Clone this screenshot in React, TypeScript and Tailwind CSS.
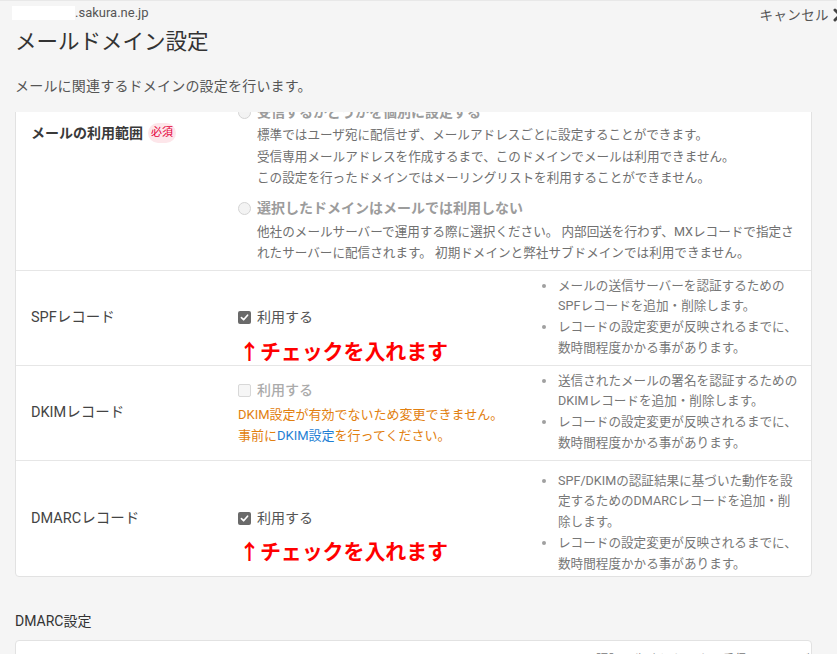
import React from "react";

function Radio() {
  return (
    <span className="inline-block w-[13px] h-[13px] rounded-full border border-[#d4d4d4] bg-[#f3f3f3] shrink-0" />
  );
}

function Checkbox({ checked }: { checked: boolean }) {
  if (checked) {
    return (
      <span className="w-[13px] h-[13px] rounded-[2px] bg-[#6a6a6a] flex items-center justify-center shrink-0">
        <svg width="9" height="9" viewBox="0 0 10 10">
          <path
            d="M1.6 5.2 L4 7.5 L8.4 2.5"
            fill="none"
            stroke="white"
            strokeWidth="1.9"
            strokeLinecap="round"
            strokeLinejoin="round"
          />
        </svg>
      </span>
    );
  }
  return (
    <span className="w-[13px] h-[13px] rounded-[2px] border border-[#d8d8d8] bg-[#f6f6f6] shrink-0" />
  );
}

function Bullets({ items, className }: { items: string[][]; className: string }) {
  return (
    <div className={"w-[271px] shrink-0 text-[12.6px] leading-[20.75px] text-[#777] " + className}>
      {items.map((lines, i) => (
        <div key={i} className="flex">
          <span className="w-[18px] h-[20.75px] shrink-0 flex items-center">
            <span className="ml-[2px] w-[4px] h-[4px] rounded-full bg-[#a0a0a0]" />
          </span>
          <div>
            {lines.map((l, j) => (
              <div key={j} className="whitespace-nowrap">
                {l}
              </div>
            ))}
          </div>
        </div>
      ))}
    </div>
  );
}

function Annotation() {
  return (
    <div className="absolute z-10 left-[1px] top-[33px] whitespace-nowrap text-[21px] leading-[22px] font-bold text-[#ff0000] tracking-[-0.1px]">
      ↑チェックを入れます
    </div>
  );
}

export default function App() {
  return (
    <div className="w-[837px] h-[654px] overflow-hidden bg-[#f5f5f5] border-t border-[#e8e8e8] flex flex-col font-[Roboto,'Noto_Sans_CJK_JP',sans-serif]">
      {/* header row */}
      <div className="h-[27px] flex shrink-0">
        <div className="mt-[3px] h-[18px] flex items-center pl-[12px]">
          <span className="w-[63px] h-[14px] bg-white" />
          <span className="text-[13px] text-[#555]">.sakura.ne.jp</span>
        </div>
        <div className="ml-auto mr-[-11px] mt-[4px] h-[20px] flex items-center gap-[3px]">
          <span className="text-[13.5px] text-[#555] tracking-[0.4px]">キャンセル</span>
          <svg width="16" height="16" viewBox="0 0 16 16">
            <path d="M3 3 L13 13 M13 3 L3 13" stroke="#444" strokeWidth="3" strokeLinecap="round" />
          </svg>
        </div>
      </div>

      <h1 className="shrink-0 pl-[15px] text-[21.5px] leading-[28px] text-[#333]">メールドメイン設定</h1>
      <p className="shrink-0 mt-[20px] pl-[15px] text-[14px] leading-[20px] text-[#555] tracking-[0.2px]">
        メールに関連するドメインの設定を行います。
      </p>

      {/* scroll area */}
      <div className="mt-[16px] flex-1 overflow-hidden">
        <div className="-mt-[21px] ml-[15px] w-[797px] bg-white border border-[#e2e2e2] rounded-[4px]">
          {/* row 1 */}
          <div className="flex">
            <div className="w-[222px] shrink-0 pl-[15px] pt-[31px]">
              <div className="h-[20px] flex items-center">
                <span className="text-[14px] font-bold text-[#3a3a3a]">メールの利用範囲</span>
                <span className="ml-[5px] h-[20px] w-[28px] rounded-full bg-[#fde6ea] text-[#e4003a] text-[11px] flex items-center justify-center">
                  必須
                </span>
              </div>
            </div>
            <div className="flex-1 pt-[8px] pb-[6px]">
              <div className="flex items-center gap-[6px] h-[24px]">
                <Radio />
                <span className="text-[14px] font-bold text-[#9c9c9c]">受信するかどうかを個別に設定する</span>
              </div>
              <div className="pl-[19px] text-[12.6px] leading-[21.5px] text-[#707070]">
                <div>標準ではユーザ宛に配信せず、メールアドレスごとに設定することができます。</div>
                <div>受信専用メールアドレスを作成するまで、このドメインでメールは利用できません。</div>
                <div>この設定を行ったドメインではメーリングリストを利用することができません。</div>
              </div>
              <div className="mt-[8px] flex items-center gap-[6px] h-[24px]">
                <Radio />
                <span className="text-[14px] font-bold text-[#9c9c9c]">選択したドメインはメールでは利用しない</span>
              </div>
              <div className="pl-[19px] text-[12.6px] leading-[21.5px] text-[#707070]">
                <div className="whitespace-nowrap">
                  他社のメールサーバーで運用する際に選択ください。 内部回送を行わず、MXレコードで指定さ
                </div>
                <div className="whitespace-nowrap">
                  れたサーバーに配信されます。 初期ドメインと弊社サブドメインでは利用できません。
                </div>
              </div>
            </div>
          </div>

          {/* SPF */}
          <div className="flex items-center min-h-[95px] border-t border-[#e6e6e6]">
            <div className="w-[222px] shrink-0 pl-[15px] text-[14.5px] text-[#444]">SPFレコード</div>
            <div className="w-[302px] shrink-0 relative">
              <div className="h-[20px] flex items-center gap-[6px]">
                <Checkbox checked />
                <span className="text-[14px] text-[#555]">利用する</span>
              </div>
              <Annotation />
            </div>
            <Bullets
              className="self-start pt-[5px]"
              items={[
                ["メールの送信サーバーを認証するための", "SPFレコードを追加・削除します。"],
                ["レコードの設定変更が反映されるまでに、", "数時間程度かかる事があります。"],
              ]}
            />
          </div>

          {/* DKIM */}
          <div className="flex items-center min-h-[95px] border-t border-[#e6e6e6]">
            <div className="w-[222px] shrink-0 pl-[15px] text-[14.5px] text-[#444]">DKIMレコード</div>
            <div className="w-[302px] shrink-0">
              <div className="h-[22px] flex items-center gap-[6px]">
                <Checkbox checked={false} />
                <span className="text-[14px] font-medium text-[#ababab]">利用する</span>
              </div>
              <div className="mt-[3px] text-[13px] leading-[21px] text-[#e2800f]">
                <div>DKIM設定が有効でないため変更できません。</div>
                <div>
                  事前に<span className="text-[#1f7fd4]">DKIM設定</span>を行ってください。
                </div>
              </div>
            </div>
            <Bullets
              className="self-start pt-[5px]"
              items={[
                ["送信されたメールの署名を認証するための", "DKIMレコードを追加・削除します。"],
                ["レコードの設定変更が反映されるまでに、", "数時間程度かかる事があります。"],
              ]}
            />
          </div>

          {/* DMARC */}
          <div className="flex items-center min-h-[95px] border-t border-[#e6e6e6]">
            <div className="w-[222px] shrink-0 pl-[15px] text-[14.5px] text-[#444]">DMARCレコード</div>
            <div className="w-[302px] shrink-0 relative">
              <div className="h-[20px] flex items-center gap-[6px]">
                <Checkbox checked />
                <span className="text-[14px] text-[#555]">利用する</span>
              </div>
              <Annotation />
            </div>
            <Bullets
              className="pt-[10px] pb-[2px]"
              items={[
                ["SPF/DKIMの認証結果に基づいた動作を設", "定するためのDMARCレコードを追加・削", "除します。"],
                ["レコードの設定変更が反映されるまでに、", "数時間程度かかる事があります。"],
              ]}
            />
          </div>
        </div>

        <h2 className="mt-[34px] pl-[15px] text-[14px] leading-[20px] text-[#333]">DMARC設定</h2>

        <div className="mt-[9px] ml-[15px] w-[797px] h-[60px] bg-white border border-[#e2e2e2] rounded-t-[4px] flex">
          <div className="w-[222px] shrink-0" />
          <div className="w-[302px] shrink-0" />
          <Bullets
            className="pt-[9px]"
            items={[["メール認証に失敗したときに受信サーバーが取る動", "作を設定します。"]]}
          />
        </div>
      </div>
    </div>
  );
}
